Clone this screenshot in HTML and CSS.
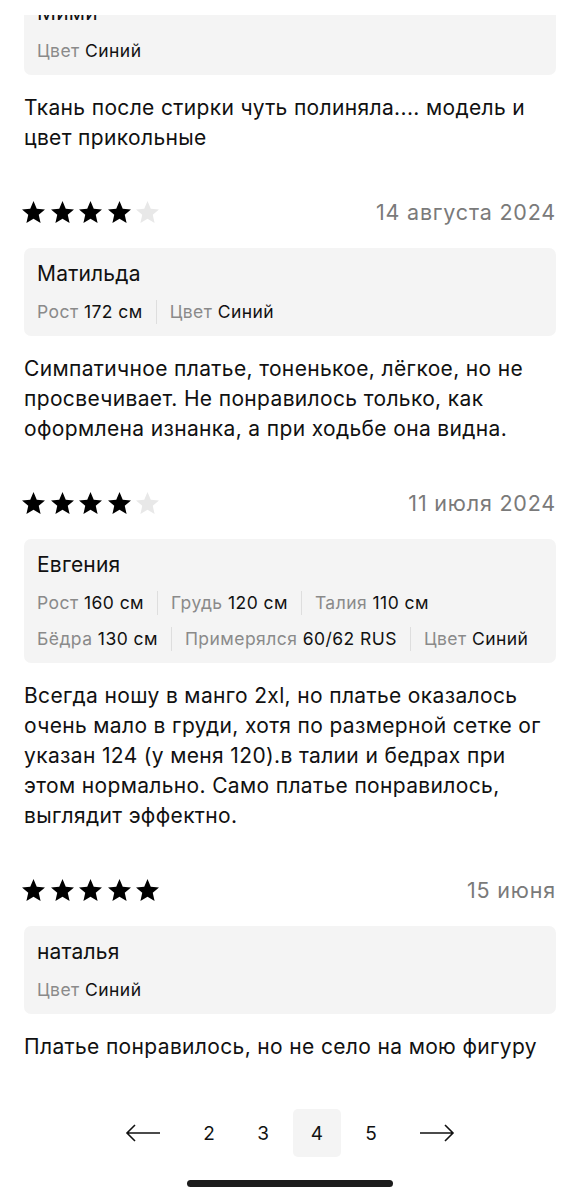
FILE: index.html
```html
<!DOCTYPE html>
<html lang="ru">
<head>
<meta charset="utf-8">
<link rel="stylesheet" href="styles.css">
</head>
<body>
<svg width="0" height="0" class="defs">
  <defs>
    <path id="star" d="M10 0L12.82 6.62L19.99 7.26L14.56 11.98L16.17 18.99L10 15.3L3.83 18.99L5.44 11.98L0.01 7.26L7.18 6.62Z"/>
  </defs>
</svg>
<div class="top-cover"></div>
<main class="page">
  <section class="review">
    <div class="card">
      <div class="name">Мими</div>
      <div class="meta-row">
        <span class="meta"><span class="label">Цвет</span> Синий</span>
      </div>
    </div>
    <p class="text">Ткань после стирки чуть полиняла.... модель и цвет прикольные</p>
  </section>

  <section class="review">
    <div class="head">
      <div class="stars">
        <svg class="star on" viewBox="0 0 20 19"><use href="#star"/></svg>
        <svg class="star on" viewBox="0 0 20 19"><use href="#star"/></svg>
        <svg class="star on" viewBox="0 0 20 19"><use href="#star"/></svg>
        <svg class="star on" viewBox="0 0 20 19"><use href="#star"/></svg>
        <svg class="star off" viewBox="0 0 20 19"><use href="#star"/></svg>
      </div>
      <div class="date">14 августа 2024</div>
    </div>
    <div class="card">
      <div class="name">Матильда</div>
      <div class="meta-row">
        <span class="meta"><span class="label">Рост</span> 172 см</span>
        <span class="meta"><span class="label">Цвет</span> Синий</span>
      </div>
    </div>
    <p class="text">Симпатичное платье, тоненькое, лёгкое, но не просвечивает. Не понравилось только, как оформлена изнанка, а при ходьбе она видна.</p>
  </section>

  <section class="review">
    <div class="head">
      <div class="stars">
        <svg class="star on" viewBox="0 0 20 19"><use href="#star"/></svg>
        <svg class="star on" viewBox="0 0 20 19"><use href="#star"/></svg>
        <svg class="star on" viewBox="0 0 20 19"><use href="#star"/></svg>
        <svg class="star on" viewBox="0 0 20 19"><use href="#star"/></svg>
        <svg class="star off" viewBox="0 0 20 19"><use href="#star"/></svg>
      </div>
      <div class="date">11 июля 2024</div>
    </div>
    <div class="card">
      <div class="name">Евгения</div>
      <div class="meta-row">
        <span class="meta"><span class="label">Рост</span> 160 см</span>
        <span class="meta"><span class="label">Грудь</span> 120 см</span>
        <span class="meta"><span class="label">Талия</span> 110 см</span>
      </div>
      <div class="meta-row">
        <span class="meta"><span class="label">Бёдра</span> 130 см</span>
        <span class="meta"><span class="label">Примерялся</span> 60/62 RUS</span>
        <span class="meta"><span class="label">Цвет</span> Синий</span>
      </div>
    </div>
    <p class="text">Всегда ношу в манго 2xl, но платье оказалось очень мало в груди, хотя по размерной сетке ог указан 124 (у меня 120).в талии и бедрах при этом нормально. Само платье понравилось, выглядит эффектно.</p>
  </section>

  <section class="review">
    <div class="head">
      <div class="stars">
        <svg class="star on" viewBox="0 0 20 19"><use href="#star"/></svg>
        <svg class="star on" viewBox="0 0 20 19"><use href="#star"/></svg>
        <svg class="star on" viewBox="0 0 20 19"><use href="#star"/></svg>
        <svg class="star on" viewBox="0 0 20 19"><use href="#star"/></svg>
        <svg class="star on" viewBox="0 0 20 19"><use href="#star"/></svg>
      </div>
      <div class="date">15 июня</div>
    </div>
    <div class="card">
      <div class="name">наталья</div>
      <div class="meta-row">
        <span class="meta"><span class="label">Цвет</span> Синий</span>
      </div>
    </div>
    <p class="text">Платье понравилось, но не село на мою фигуру</p>
  </section>

  <nav class="pager">
    <span class="arrow">
      <svg viewBox="0 0 36 20" width="36" height="20"><path d="M35 10H2M10 2L2 10l8 8" fill="none" stroke="#111" stroke-width="1.6"/></svg>
    </span>
    <div class="pages">
      <span class="pg">2</span>
      <span class="pg">3</span>
      <span class="pg active">4</span>
      <span class="pg">5</span>
    </div>
    <span class="arrow">
      <svg viewBox="0 0 36 20" width="36" height="20"><path d="M1 10h33M26 2l8 8-8 8" fill="none" stroke="#111" stroke-width="1.6"/></svg>
    </span>
  </nav>

  <div class="home-bar"></div>
</main>
</body>
</html>
```

FILE: styles.css
```css
* { box-sizing: border-box; }

html, body {
  margin: 0;
  padding: 0;
  background: #fff;
}

body {
  font-family: Inter, "Noto Sans", "DejaVu Sans", sans-serif;
  color: #111;
  overflow: hidden;
  height: 1200px;
}

.defs {
  position: absolute;
  width: 0;
  height: 0;
}

.top-cover {
  position: fixed;
  top: 0;
  left: 0;
  right: 0;
  height: 15px;
  background: #fff;
  z-index: 2;
}

.page {
  padding: 0 24px;
  margin-top: -13px;
  display: flex;
  flex-direction: column;
}

.review {
  display: flex;
  flex-direction: column;
  margin-bottom: 44px;
}

.head {
  display: flex;
  align-items: center;
  justify-content: space-between;
  height: 30px;
  margin-bottom: 21px;
}

.stars {
  display: flex;
  gap: 5.5px;
  margin-left: -2px;
}

.star {
  width: 23px;
  height: 22px;
  display: block;
}

.star.on { fill: #000; }
.star.off { fill: #e8e8e8; }

.date {
  font-size: 21.5px;
  color: #7a7a7a;
  letter-spacing: 0.8px;
}

.card {
  background: #f4f4f4;
  border-radius: 7px;
  padding: 12px 12px 12px 13px;
  display: flex;
  flex-direction: column;
  gap: 12px;
}

.name {
  font-size: 21px;
  line-height: 28px;
  letter-spacing: 0.2px;
  color: #111;
}

.meta-row {
  display: flex;
  align-items: center;
  height: 24px;
  font-size: 17.5px;
  letter-spacing: 0.45px;
  color: #111;
}

.meta {
  padding: 0 13px;
  border-left: 1px solid #dedede;
  line-height: 24px;
  white-space: nowrap;
}

.meta:first-child {
  padding-left: 0;
  border-left: none;
}

.label {
  color: #8a8a8a;
}

.text {
  margin: 18px 0 0;
  font-size: 21px;
  line-height: 30px;
  letter-spacing: 0.35px;
  color: #111;
}

.pager {
  display: flex;
  justify-content: center;
  align-items: center;
  gap: 18px;
  margin-top: 3px;
}

.arrow {
  width: 48px;
  height: 48px;
  display: flex;
  align-items: center;
  justify-content: center;
}

.pages {
  display: flex;
  gap: 6px;
}

.pg {
  width: 48px;
  height: 48px;
  display: flex;
  align-items: center;
  justify-content: center;
  font-size: 19px;
  color: #111;
  border-radius: 5px;
}

.pg.active {
  background: #f4f4f4;
}

.home-bar {
  align-self: center;
  width: 206px;
  height: 7px;
  border-radius: 4px;
  background: #1c1c1c;
  margin-top: 23px;
}
```
